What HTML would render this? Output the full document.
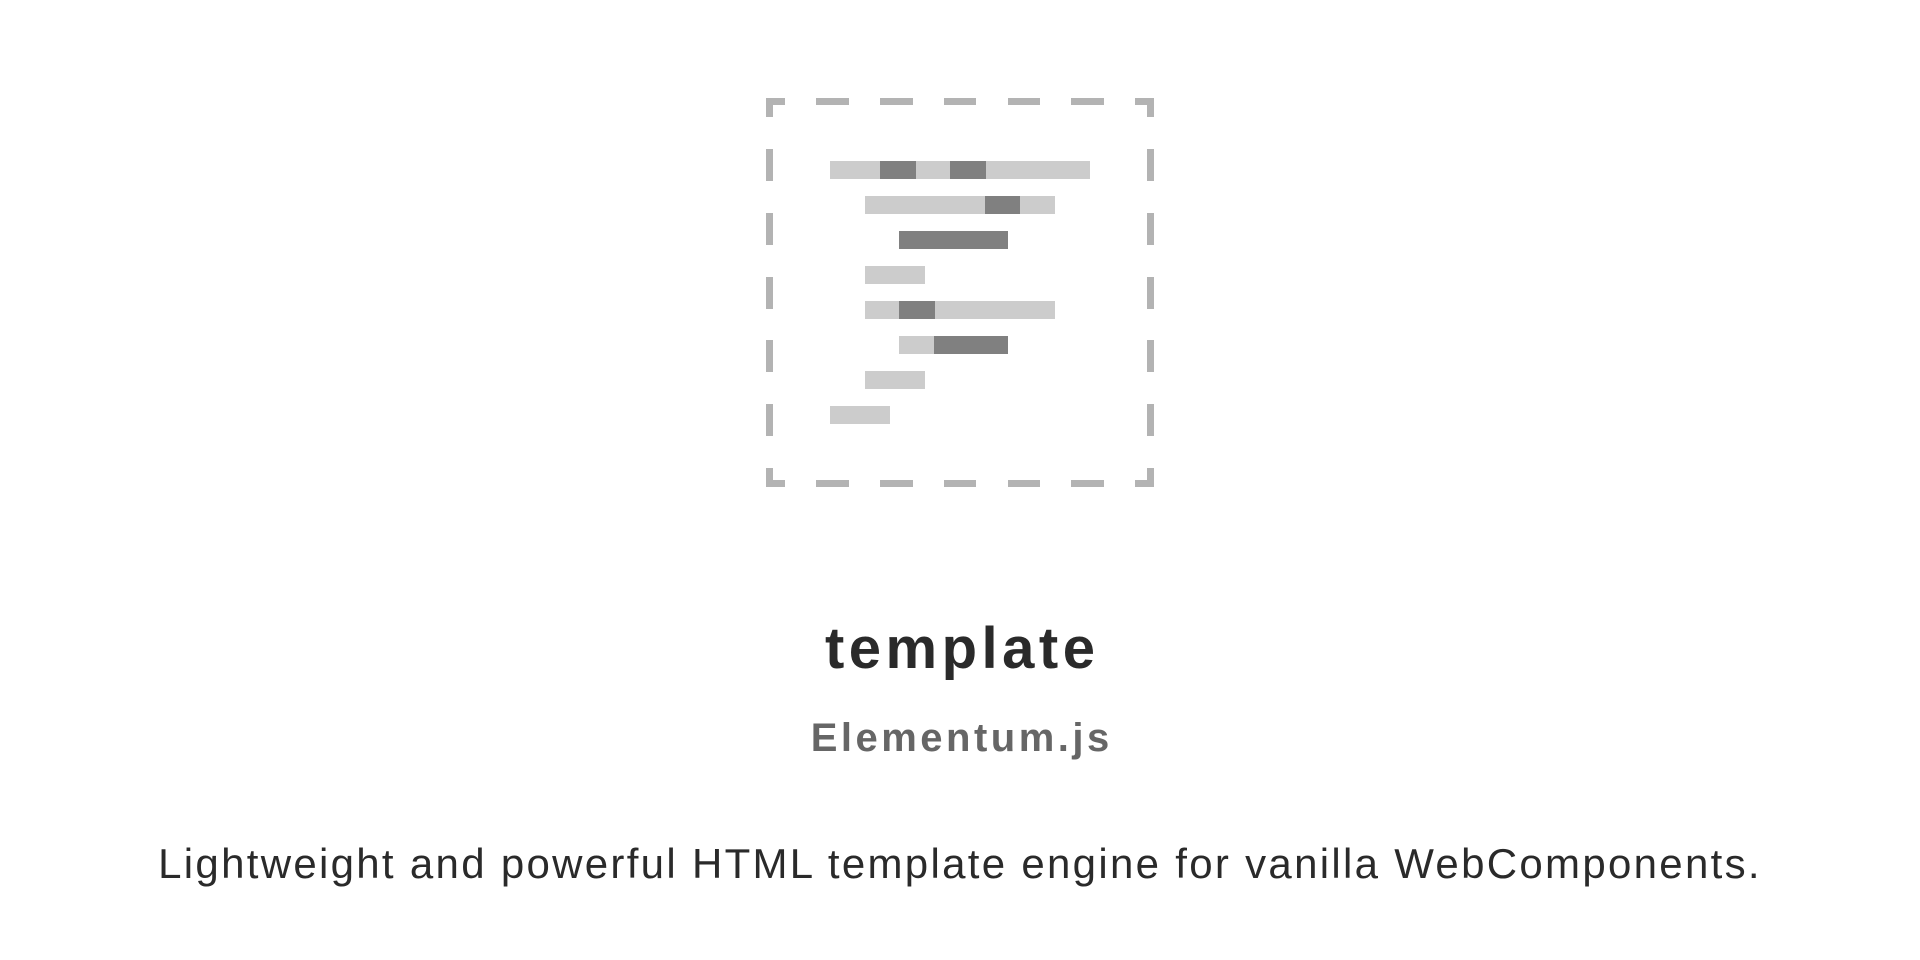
<!DOCTYPE html>
<html><head><meta charset="utf-8"><style>
html,body{margin:0;padding:0;background:#fff;width:1920px;height:960px;overflow:hidden}
.t{position:absolute;left:0;width:1920px;text-align:center;font-family:"Liberation Sans",sans-serif;white-space:nowrap}
</style></head><body>
<svg width="1920" height="960" style="position:absolute;left:0;top:0">
<g fill="#b3b3b3">
<path d="M766 98h19v7h-12v12h-7z"/>
<path d="M1154 98h-19v7h12v12h7z"/>
<path d="M766 487h19v-7h-12v-12h-7z"/>
<path d="M1154 487h-19v-7h12v-12h7z"/>
<rect x="816" y="98" width="33" height="7"/><rect x="880" y="98" width="33" height="7"/><rect x="944" y="98" width="32" height="7"/><rect x="1008" y="98" width="32" height="7"/><rect x="1071" y="98" width="33" height="7"/>
<rect x="816" y="480" width="33" height="7"/><rect x="880" y="480" width="33" height="7"/><rect x="944" y="480" width="32" height="7"/><rect x="1008" y="480" width="32" height="7"/><rect x="1071" y="480" width="33" height="7"/>
<rect x="766" y="149" width="7" height="32"/><rect x="766" y="213" width="7" height="32"/><rect x="766" y="277" width="7" height="32"/><rect x="766" y="340" width="7" height="32"/><rect x="766" y="404" width="7" height="32"/>
<rect x="1147" y="149" width="7" height="32"/><rect x="1147" y="213" width="7" height="32"/><rect x="1147" y="277" width="7" height="32"/><rect x="1147" y="340" width="7" height="32"/><rect x="1147" y="404" width="7" height="32"/>
</g>
<g fill="#cccccc">
<rect x="830" y="161" width="260" height="18"/>
<rect x="865" y="196" width="190" height="18"/>
<rect x="865" y="266" width="60" height="18"/>
<rect x="865" y="301" width="190" height="18"/>
<rect x="899" y="336" width="109" height="18"/>
<rect x="865" y="371" width="60" height="18"/>
<rect x="830" y="406" width="60" height="18"/>
</g>
<g fill="#808080">
<rect x="880" y="161" width="36" height="18"/>
<rect x="950" y="161" width="36" height="18"/>
<rect x="985" y="196" width="35" height="18"/>
<rect x="899" y="231" width="109" height="18"/>
<rect x="899" y="301" width="36" height="18"/>
<rect x="934" y="336" width="74" height="18"/>
</g>
</svg>
<div class="t" style="top:615px;font-size:58px;font-weight:bold;color:#2a2a2a;letter-spacing:4.5px;text-indent:4.5px">template</div>
<div class="t" style="top:716px;font-size:40px;font-weight:bold;color:#666;letter-spacing:3.5px;text-indent:3.5px">Elementum.js</div>
<div class="t" style="top:840px;font-size:42px;color:#2a2a2a;letter-spacing:2.3px">Lightweight and powerful HTML template engine for vanilla WebComponents.</div>
</body></html>
